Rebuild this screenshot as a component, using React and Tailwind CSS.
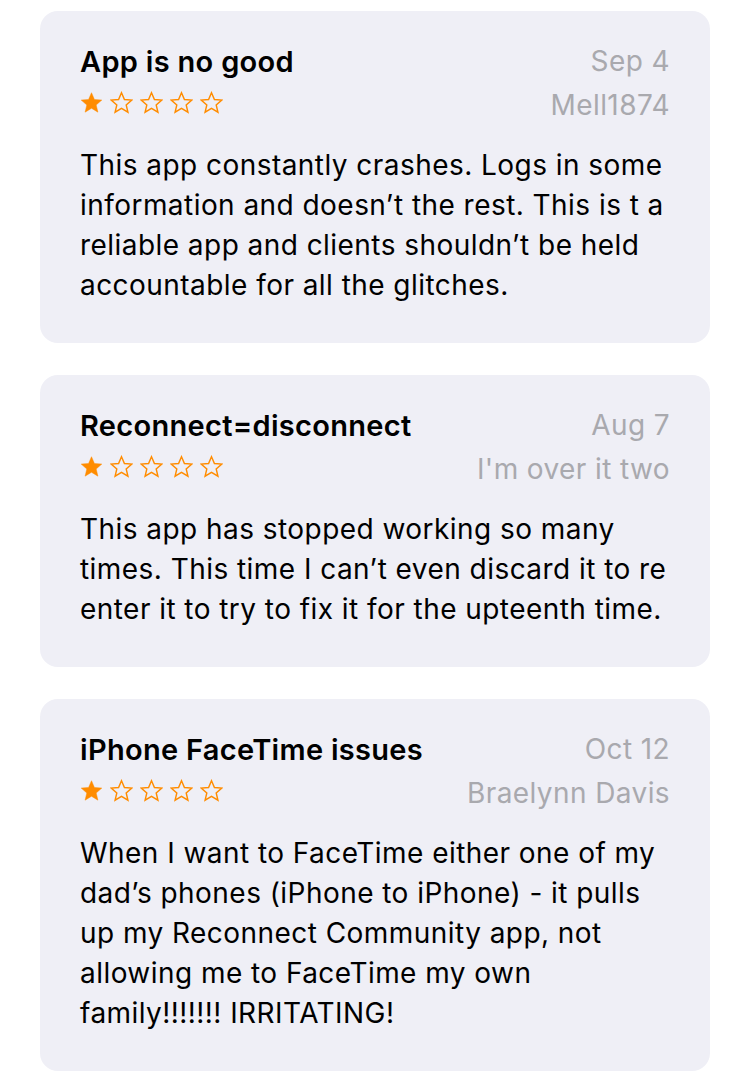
import React from 'react';

const reviews = [
  {
    title: 'App is no good',
    date: 'Sep 4',
    author: 'Mell1874',
    rating: 1,
    body: 'This app constantly crashes. Logs in some information and doesn\u2019t the rest. This is t a reliable app and clients shouldn\u2019t be held accountable for all the glitches.',
  },
  {
    title: 'Reconnect=disconnect',
    date: 'Aug 7',
    author: "I'm over it two",
    rating: 1,
    body: 'This app has stopped working so many times. This time I can\u2019t even discard it to re enter it to try to fix it for the upteenth time.',
  },
  {
    title: 'iPhone FaceTime issues',
    date: 'Oct 12',
    author: 'Braelynn Davis',
    rating: 1,
    body: 'When I want to FaceTime either one of my dad\u2019s phones (iPhone to iPhone) - it pulls up my Reconnect Community app, not allowing me to FaceTime my own family!!!!!!! IRRITATING!',
  },
];

const Star = ({ filled }) => (
  <svg width="23" height="23" viewBox="0 0 24 24" className="shrink-0">
    <path
      d="M12 1.8l3.05 7.1 7.7.62-5.86 5.02 1.8 7.52L12 18.05l-6.69 4.01 1.8-7.52-5.86-5.02 7.7-.62z"
      fill={filled ? '#ff8c00' : 'none'}
      stroke="#ff8c00"
      strokeWidth={filled ? 0.5 : 1.5}
      strokeLinejoin="miter"
    />
  </svg>
);

const ReviewCard = ({ review }) => (
  <div className="bg-[#efeff6] rounded-[18px] px-10 pt-[30px] pb-[38px]">
    <div className="flex justify-between">
      <div className="flex flex-col">
        <div className="text-[29px] leading-[41px] font-semibold text-black tracking-[0.3px]">
          {review.title}
        </div>
        <div className="h-[41px] flex items-center gap-[7px]">
          {[1, 2, 3, 4, 5].map(i => (
            <Star key={i} filled={i <= review.rating} />
          ))}
        </div>
      </div>
      <div className="flex flex-col items-end text-[28px] leading-[41px] tracking-[0.4px] text-[#a9a9ae]">
        <div>{review.date}</div>
        <div className="mt-[3px]">{review.author}</div>
      </div>
    </div>
    <p className="mt-[19px] text-[28px] leading-[40px] tracking-[0.45px] text-black">
      {review.body}
    </p>
  </div>
);

const App = () => {
  return (
    <div className="min-h-screen bg-white px-10 pt-[11px] flex flex-col gap-[32px]" style={{ fontFamily: 'Inter, "Noto Sans", sans-serif' }}>
      {reviews.map(r => (
        <ReviewCard key={r.title} review={r} />
      ))}
    </div>
  );
};

export default App;
